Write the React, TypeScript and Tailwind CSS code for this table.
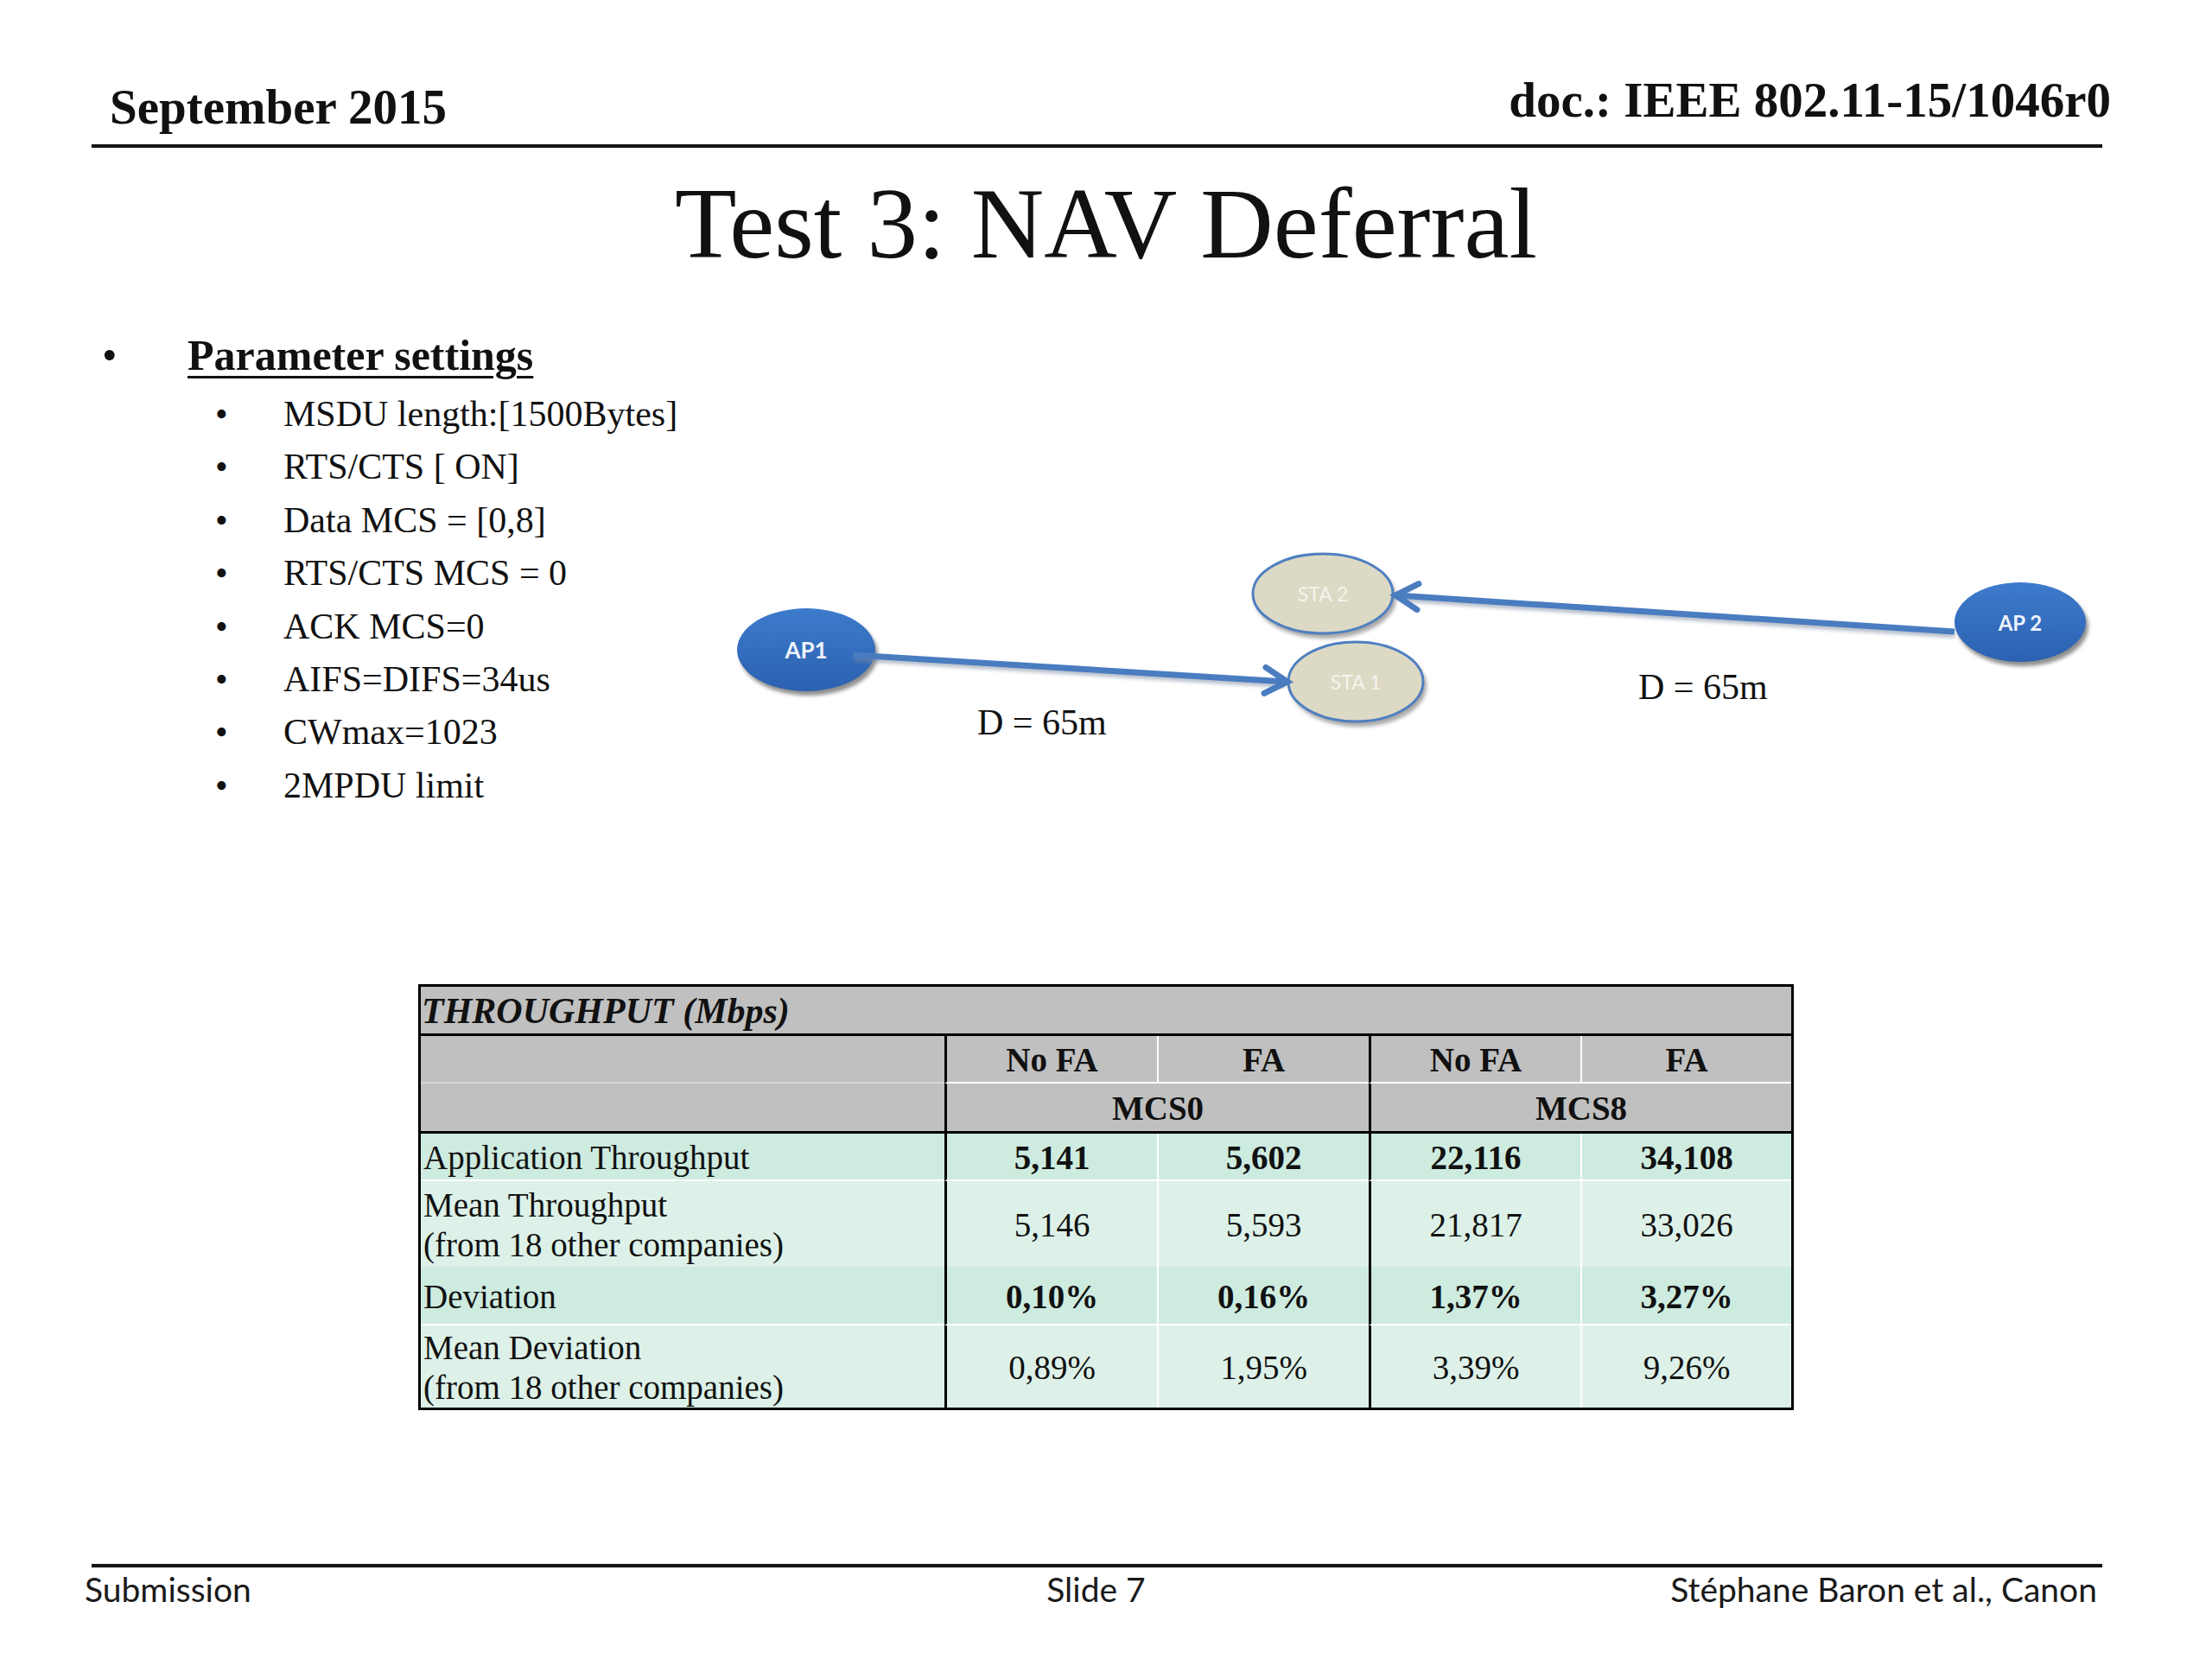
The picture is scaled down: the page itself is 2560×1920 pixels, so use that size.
import React from "react";

const serif = "font-['Liberation_Serif','Times_New_Roman',serif]";
const sans = "font-['Lato','Open_Sans',sans-serif]";

const settings = [
  "MSDU length:[1500Bytes]",
  "RTS/CTS [ ON]",
  "Data MCS = [0,8]",
  "RTS/CTS MCS = 0",
  "ACK MCS=0",
  "AIFS=DIFS=34us",
  "CWmax=1023",
  "2MPDU limit",
];

const rows = [
  {
    label: ["Application Throughput"],
    values: ["5,141", "5,602", "22,116", "34,108"],
    bold: true,
    cls: "h-[55px] bg-[#cdebdf] border-b-2 border-b-white",
  },
  {
    label: ["Mean Throughput", "(from 18 other companies)"],
    values: ["5,146", "5,593", "21,817", "33,026"],
    bold: false,
    cls: "h-[99px] bg-[#ddf1e8]",
  },
  {
    label: ["Deviation"],
    values: ["0,10%", "0,16%", "1,37%", "3,27%"],
    bold: true,
    cls: "h-[68px] bg-[#cdebdf] border-b-2 border-b-white",
  },
  {
    label: ["Mean Deviation", "(from 18 other companies)"],
    values: ["0,89%", "1,95%", "3,39%", "9,26%"],
    bold: false,
    cls: "h-[95px] bg-[#ddf1e8]",
  },
];

// left border of each data column: black between groups, white inside a group
const colBorder = [
  "border-l-[3px] border-l-black",
  "border-l-2 border-l-white",
  "border-l-[3px] border-l-black",
  "border-l-2 border-l-white",
];

function arrowHead(tx: number, ty: number, fx: number, fy: number) {
  const dx = tx - fx;
  const dy = ty - fy;
  const len = Math.hypot(dx, dy);
  const ux = dx / len;
  const uy = dy / len;
  const bx = tx - 26 * ux;
  const by = ty - 26 * uy;
  const px = -uy;
  const py = ux;
  return {
    line: { x2: tx - 5 * ux, y2: ty - 5 * uy },
    points: `${bx + 15 * px},${by + 15 * py} ${tx},${ty} ${bx - 15 * px},${by - 15 * py}`,
  };
}

function Diagram() {
  const a1 = arrowHead(1490, 790, 987, 759);
  const a2 = arrowHead(1615, 690, 2262, 732);
  return (
    <svg width="1660" height="300" viewBox="800 580 1660 300" className="shrink-0 mt-[193px]">
      <defs>
        <linearGradient id="apBlue" x1="0" y1="0" x2="0" y2="1">
          <stop offset="0" stopColor="#3d7bcc" />
          <stop offset="1" stopColor="#2c61b0" />
        </linearGradient>
        <filter id="soft" x="-20%" y="-20%" width="140%" height="140%">
          <feGaussianBlur stdDeviation="2" />
        </filter>
      </defs>

      {/* AP1 */}
      <ellipse cx="936" cy="758" rx="80" ry="48" fill="#8f8f8f" filter="url(#soft)" />
      <ellipse cx="933" cy="753" rx="80" ry="48" fill="url(#apBlue)" />
      <text x="933" y="763" textAnchor="middle" fill="#eef3fb" fontFamily="Lato, 'Open Sans', sans-serif" fontWeight="700" fontSize="26">AP1</text>

      {/* STA2 */}
      <ellipse cx="1534" cy="693" rx="82" ry="47" fill="#a9a9a9" filter="url(#soft)" />
      <ellipse cx="1531" cy="688" rx="81" ry="46" fill="#dcd9c5" stroke="#4f7fc0" strokeWidth="3" />
      <text x="1531" y="697" textAnchor="middle" fill="#f5f3ea" fontFamily="Lato, 'Open Sans', sans-serif" fontSize="23">STA 2</text>

      {/* STA1 */}
      <ellipse cx="1572" cy="795" rx="79" ry="47" fill="#a9a9a9" filter="url(#soft)" />
      <ellipse cx="1569" cy="790" rx="78" ry="46" fill="#dcd9c5" stroke="#4f7fc0" strokeWidth="3" />
      <text x="1569" y="799" textAnchor="middle" fill="#f5f3ea" fontFamily="Lato, 'Open Sans', sans-serif" fontSize="23">STA 1</text>

      {/* AP2 */}
      <ellipse cx="2341" cy="726" rx="76" ry="46" fill="#8f8f8f" filter="url(#soft)" />
      <ellipse cx="2338" cy="721" rx="76" ry="46" fill="url(#apBlue)" />
      <text x="2338" y="731" textAnchor="middle" fill="#eef3fb" fontFamily="Lato, 'Open Sans', sans-serif" fontWeight="700" fontSize="24">AP 2</text>

      {/* arrow AP1 -> STA1 */}
      <line x1="989" y1="763" x2={a1.line.x2 + 2} y2={a1.line.y2 + 4} stroke="#7c8aa0" strokeWidth="6" opacity="0.6" filter="url(#soft)" />
      <line x1="987" y1="759" x2={a1.line.x2} y2={a1.line.y2} stroke="#4a7cc0" strokeWidth="7" />
      <polyline points={a1.points} fill="none" stroke="#4a7cc0" strokeWidth="7" strokeLinejoin="miter" strokeLinecap="round" />

      {/* arrow AP2 -> STA2 */}
      <line x1="2262" y1="736" x2={a2.line.x2 + 2} y2={a2.line.y2 + 4} stroke="#7c8aa0" strokeWidth="6" opacity="0.6" filter="url(#soft)" />
      <line x1="2262" y1="732" x2={a2.line.x2} y2={a2.line.y2} stroke="#4a7cc0" strokeWidth="7" />
      <polyline points={a2.points} fill="none" stroke="#4a7cc0" strokeWidth="7" strokeLinejoin="miter" strokeLinecap="round" />

      <text x="1131" y="851" fill="#111" fontFamily="'Liberation Serif', 'Times New Roman', serif" fontSize="42">D = 65m</text>
      <text x="1896" y="810" fill="#111" fontFamily="'Liberation Serif', 'Times New Roman', serif" fontSize="42">D = 65m</text>
    </svg>
  );
}

function ThroughputTable() {
  return (
    <div className={`${serif} mx-auto w-[1592px] border-[3px] border-black text-[#111] grid grid-cols-[606px_246px_245px_245px_244px]`}>
      <div className="col-span-5 h-[57px] bg-[#c0c0c0] border-b-[3px] border-b-black flex items-center pl-[1px] pt-[2px] text-[42px] leading-none font-bold italic">
        THROUGHPUT (Mbps)
      </div>

      <div className="h-[55px] bg-[#c0c0c0] border-b-2 border-b-[#d4d4d4]" />
      {["No FA", "FA", "No FA", "FA"].map((h, i) => (
        <div
          key={i}
          className={`h-[55px] bg-[#c0c0c0] border-b-2 border-b-white ${colBorder[i]} flex items-center justify-center pt-[2px] text-[39px] leading-none font-bold`}
        >
          {h}
        </div>
      ))}

      <div className="h-[58px] bg-[#c0c0c0] border-b-[3px] border-b-black" />
      {["MCS0", "MCS8"].map((h) => (
        <div
          key={h}
          className="col-span-2 h-[58px] bg-[#c0c0c0] border-b-[3px] border-b-black border-l-[3px] border-l-black flex items-center justify-center pt-[2px] text-[39px] leading-none font-bold"
        >
          {h}
        </div>
      ))}

      {rows.map((r, ri) => (
        <React.Fragment key={ri}>
          <div className={`${r.cls} flex flex-col justify-center pl-[3px] pt-[3px] text-[39px] leading-[46px]`}>
            {r.label.map((l) => (
              <span key={l}>{l}</span>
            ))}
          </div>
          {r.values.map((v, i) => (
            <div
              key={i}
              className={`${r.cls} ${colBorder[i]} flex items-center justify-center pt-[2px] text-[39px] leading-none ${r.bold ? "font-bold" : ""}`}
            >
              {v}
            </div>
          ))}
        </React.Fragment>
      ))}
    </div>
  );
}

export default function App() {
  return (
    <div className="w-[2560px] h-[1920px] bg-white text-[#111] flex flex-col overflow-hidden">
      {/* Header */}
      <div className={`${serif} flex items-start justify-between pl-[127px] pr-[117px] pt-[87px] font-bold text-[57px] leading-none`}>
        <span className="mt-[8px]">September 2015</span>
        <span>doc.: IEEE 802.11-15/1046r0</span>
      </div>
      <div className="ml-[106px] w-[2327px] h-[4px] mt-[15px] bg-[#151515] shadow-[0_0_1px_#555]" />

      {/* Title */}
      <h1 className={`${serif} mt-[29px] text-center text-[117px] leading-none`}>Test 3: NAV Deferral</h1>

      {/* Parameters + diagram */}
      <div className="flex mt-[69px]">
        <div className={`${serif} w-[800px] shrink-0 pl-[118px]`}>
          <div className="flex text-[50px] leading-none">
            <span className="w-[99px] shrink-0">•</span>
            <span className="font-bold underline decoration-[3px] underline-offset-[7px]">Parameter settings</span>
          </div>
          <ul className="mt-[13px] text-[42px] leading-[61.4px]">
            {settings.map((s) => (
              <li key={s} className="flex pl-[131px]">
                <span className="w-[79px] shrink-0">•</span>
                <span className="whitespace-nowrap">{s}</span>
              </li>
            ))}
          </ul>
        </div>
        <Diagram />
      </div>

      {/* Table */}
      <div className="mt-[199px]">
        <ThroughputTable />
      </div>

      {/* Footer */}
      <div className="ml-[106px] w-[2327px] h-[4px] mt-[178px] bg-[#151515] shadow-[0_0_1px_#555]" />
      <div className={`${sans} mt-[6px] pl-[98px] pr-[133px] grid grid-cols-[1fr_auto_1fr] text-[39px] leading-none text-[#1a1a1a]`}>
        <span>Submission</span>
        <span className="ml-[12px]">Slide 7</span>
        <span className="text-right">Stéphane Baron et al., Canon</span>
      </div>
    </div>
  );
}
